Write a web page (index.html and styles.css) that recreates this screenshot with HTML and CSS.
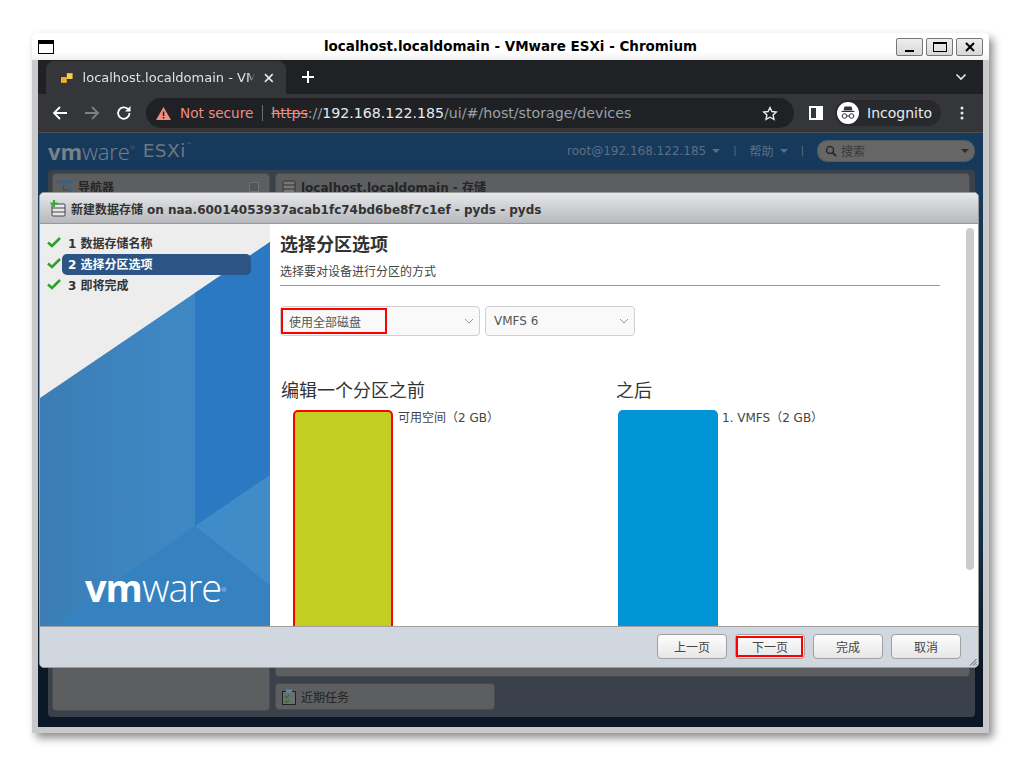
FILE: index.html
```html
<!DOCTYPE html>
<html>
<head>
  <meta charset="utf-8">
  <title>localhost.localdomain - VMware ESXi - Chromium</title>
  <link rel="stylesheet" href="styles.css">
</head>
<body>
  <div class="window">
    <div class="titlebar">
      <span class="win-icon"></span>
      <span class="win-title">localhost.localdomain - VMware ESXi - Chromium</span>
      <div class="win-buttons">
        <span class="win-btn"><i class="ico-min"></i></span>
        <span class="win-btn"><i class="ico-max"></i></span>
        <span class="win-btn">
          <svg width="12" height="12" viewBox="0 0 12 12"><path d="M2 2l8 8M10 2l-8 8" stroke="#000" stroke-width="2"/></svg>
        </span>
      </div>
    </div>

    <div class="browser">
      <div class="tabstrip">
        <div class="tab">
          <svg class="favicon" width="12" height="12" viewBox="0 0 12 12"><rect x="0" y="5" width="6" height="6" fill="#f2b01e"/><rect x="6" y="1" width="6" height="6" fill="#f6d04a"/></svg>
          <span class="tab-text">localhost.localdomain - VMware ESXi</span>
          <svg width="10" height="10" viewBox="0 0 10 10"><path d="M1 1l8 8M9 1l-8 8" stroke="#e8eaed" stroke-width="1.6"/></svg>
        </div>
        <svg class="new-tab" width="14" height="14" viewBox="0 0 14 14"><path d="M7 1v12M1 7h12" stroke="#fff" stroke-width="2"/></svg>
        <svg class="tab-menu" width="12" height="8" viewBox="0 0 12 8"><path d="M1.5 1.5L6 6l4.500-4.500" fill="none" stroke="#e8eaed" stroke-width="1.6"/></svg>
      </div>

      <div class="toolbar">
        <svg class="nav-ico" width="16" height="16" viewBox="0 0 16 16"><path d="M15 8H2M8 2L2 8l6 6" fill="none" stroke="#fff" stroke-width="1.800"/></svg>
        <svg class="nav-ico" width="16" height="16" viewBox="0 0 16 16"><path d="M1 8h13M8 2l6 6-6 6" fill="none" stroke="#7d7f83" stroke-width="1.800"/></svg>
        <svg class="nav-ico" width="16" height="16" viewBox="0 0 16 16"><path d="M13.500 8a5.700 5.700 0 1 1-1.700-4" fill="none" stroke="#fff" stroke-width="1.800"/><path d="M14.500 1v5.500H9z" fill="#fff"/></svg>
        <div class="omnibox">
          <svg width="15" height="13" viewBox="0 0 15 13"><path d="M7.500 0L15 13H0z" fill="#f28b82"/><rect x="6.800" y="4.500" width="1.500" height="4.500" fill="#202124"/><rect x="6.800" y="10" width="1.500" height="1.500" fill="#202124"/></svg>
          <span class="not-secure">Not secure</span>
          <span class="omni-sep"></span>
          <span class="url"><s class="scheme">https</s><span class="dim">://</span>192.168.122.185<span class="dim">/ui/#/host/storage/devices</span></span>
          <svg class="star" width="16" height="15" viewBox="0 0 16 15"><path d="M8 1.500l1.900 4 4.400.5-3.200 3 .9 4.400L8 11.200l-4 2.200.9-4.400-3.200-3 4.400-.5z" fill="none" stroke="#e8eaed" stroke-width="1.400"/></svg>
        </div>
        <span class="side-ico"><i></i></span>
        <div class="incognito">
          <svg width="22" height="22" viewBox="0 0 22 22"><circle cx="11" cy="11" r="11" fill="#fff"/><path d="M7.500 4.500h7l1 4h-9zM4.500 9h13v1h-13z" fill="#333"/><circle cx="7.500" cy="14" r="2.300" fill="none" stroke="#333"/><circle cx="14.500" cy="14" r="2.300" fill="none" stroke="#333"/><path d="M9.800 14h2.400" stroke="#333"/></svg>
          <span>Incognito</span>
        </div>
        <svg class="dots" width="4" height="14" viewBox="0 0 4 14"><circle cx="2" cy="2" r="1.500" fill="#e8eaed"/><circle cx="2" cy="7" r="1.500" fill="#e8eaed"/><circle cx="2" cy="12" r="1.500" fill="#e8eaed"/></svg>
      </div>

      <div class="esxi">
        <header class="esxi-head">
          <span class="brand"><b>vm</b>ware<sup>®</sup></span>
          <span class="brand-esxi">ESXi<sup>™</sup></span>
          <div class="esxi-user">
            <span>root@192.168.122.185</span><i class="caret"></i>
            <span class="bar">|</span>
            <span>帮助</span><i class="caret"></i>
            <span class="bar">|</span>
          </div>
          <div class="esxi-search">
            <svg width="12" height="12" viewBox="0 0 12 12"><circle cx="5" cy="5" r="3.500" fill="none" stroke="#2b2b2b" stroke-width="1.600"/><path d="M7.500 7.500L11 11" stroke="#2b2b2b" stroke-width="2"/></svg>
            <span>搜索</span><i class="caret dark"></i>
          </div>
        </header>
        <div class="esxi-main">
          <div class="pane nav-pane">
            <div class="pane-head">
              <svg width="16" height="13" viewBox="0 0 18 14"><g fill="none" stroke="#2d5f8e"><rect x=".5" y=".5" width="3" height="3"/><rect x="5" y=".5" width="2.500" height="2.500"/><rect x="9" y=".5" width="2.500" height="2.500"/><rect x="13" y=".5" width="2.500" height="2.500"/><rect x="12" y="9.500" width="3" height="3"/><path d="M7.500 5v6h4" stroke="#444"/></g></svg>
              <span>导航器</span>
              <i class="pane-pin"></i>
            </div>
          </div>
          <div class="right-col">
            <div class="pane storage-pane">
              <div class="pane-head">
                <svg width="14" height="14" viewBox="0 0 14 14"><rect x="1" y="1" width="12" height="12" rx="1.500" fill="#777" stroke="#333"/><path d="M1 5h12M1 9h12" stroke="#333"/></svg>
                <span>localhost.localdomain - 存储</span>
              </div>
            </div>
            <div class="pane tasks-pane">
              <svg width="14" height="16" viewBox="0 0 14 16"><rect x=".5" y="2.500" width="13" height="13" fill="#6c6f70" stroke="#222"/><rect x="4" y=".5" width="6" height="3" fill="#5d88aa"/><path d="M3 7l1.500 1.500L7 6M3 12l1.500 1.500L7 11" fill="none" stroke="#1f7a1f" stroke-width="1.400"/></svg>
              <span>近期任务</span>
            </div>
          </div>
        </div>
      </div>
    </div>
  </div>

  <div class="modal">
    <div class="modal-head">
      <svg width="16" height="17" viewBox="0 0 16 17"><rect x="2" y="4" width="13" height="12" rx="1" fill="#e8e8e8" stroke="#444"/><path d="M2 8h13M2 12h13" stroke="#444"/><path d="M4 0v7M.500 3.500h7" stroke="#2fae2f" stroke-width="2"/></svg>
      <span>新建数据存储 on naa.60014053937acab1fc74bd6be8f7c1ef - pyds - pyds</span>
    </div>
    <div class="modal-body">
      <aside class="steps">
        <svg class="steps-bg" width="230" height="402" viewBox="0 0 230 402">
          <defs>
            <linearGradient id="fade" x1="0" x2="1" y1="0" y2="0">
              <stop offset="0" stop-color="#3b7db4"/>
              <stop offset=".55" stop-color="#3f87c3"/>
              <stop offset="1" stop-color="#4089c6"/>
            </linearGradient>
          </defs>
          <rect width="230" height="402" fill="#ededed"/>
          <polygon points="230,18 0,174 0,402 230,402" fill="url(#fade)"/>
          <polygon points="230,18 155,69 155,302 230,251" fill="#2b79c3"/>
          <polygon points="155,302 230,251 230,361" fill="#408cc8"/>
          <polygon points="155,302 230,361 230,402 10,402" fill="#3681bf"/>
        </svg>
        <ul class="step-list">
          <li class="step"><svg class="check" width="14" height="11" viewBox="0 0 14 11"><path d="M1 5.500l4 3.500 8-8" fill="none" stroke="#2ca02c" stroke-width="2.500"/></svg><span class="step-label">1 数据存储名称</span></li>
          <li class="step active"><svg class="check" width="14" height="11" viewBox="0 0 14 11"><path d="M1 5.500l4 3.500 8-8" fill="none" stroke="#2ca02c" stroke-width="2.500"/></svg><span class="step-label">2 选择分区选项</span></li>
          <li class="step"><svg class="check" width="14" height="11" viewBox="0 0 14 11"><path d="M1 5.500l4 3.500 8-8" fill="none" stroke="#2ca02c" stroke-width="2.500"/></svg><span class="step-label">3 即将完成</span></li>
        </ul>
        <div class="steps-logo"><b>vm</b>ware<sup>®</sup></div>
      </aside>
      <section class="content">
        <h1>选择分区选项</h1>
        <p class="sub">选择要对设备进行分区的方式</p>
        <div class="select-row">
          <div class="select wide">
            <span>使用全部磁盘</span>
            <svg width="10" height="6" viewBox="0 0 10 6"><path d="M1 1l4 4 4-4" fill="none" stroke="#999"/></svg>
            <i class="mark"></i>
          </div>
          <div class="select narrow">
            <span>VMFS 6</span>
            <svg width="10" height="6" viewBox="0 0 10 6"><path d="M1 1l4 4 4-4" fill="none" stroke="#999"/></svg>
          </div>
        </div>
        <div class="compare">
          <div class="side before">
            <h2>编辑一个分区之前</h2>
            <div class="part">
              <div class="part-bar free"></div>
              <span>可用空间（2 GB）</span>
            </div>
          </div>
          <div class="side after">
            <h2>之后</h2>
            <div class="part">
              <div class="part-bar vmfs"></div>
              <span>1. VMFS（2 GB）</span>
            </div>
          </div>
        </div>
        <div class="scroll-thumb"></div>
      </section>
    </div>
    <div class="modal-foot">
      <button class="btn">上一页</button>
      <button class="btn marked">下一页</button>
      <button class="btn">完成</button>
      <button class="btn">取消</button>
      <svg class="grip" width="8" height="8" viewBox="0 0 8 8"><path d="M7.500 1L1 7.500M7.500 4L4 7.500M7.500 6.500l-1 1" stroke="#555"/></svg>
    </div>
  </div>
</body>
</html>
```

FILE: styles.css
```css
* {
  box-sizing: border-box;
}

html, body {
  margin: 0;
  height: 100%;
  background: #fff;
  overflow: hidden;
}

body {
  font-family: "DejaVu Sans", "Noto Sans CJK SC", sans-serif;
  font-size: 12px;
  color: #333;
}

/* desktop window */
.window {
  width: 957px;
  height: 700px;
  margin: 33px 0 0 32px;
  padding: 0 6px 6px;
  background: #c9c9c9;
  border-radius: 3px 3px 0 0;
  box-shadow: 4px 5px 9px rgba(0, 0, 0, .45);
  display: flex;
  flex-direction: column;
}

.titlebar {
  height: 27px;
  margin: 0 -6px;
  padding: 0 6px;
  background: linear-gradient(#fff 70%, #f0f0f0);
  border-radius: 3px 3px 0 0;
  display: flex;
  align-items: center;
  position: relative;
}

.win-icon {
  width: 16px;
  height: 14px;
  border: 1px solid #000;
  border-top-width: 4px;
  background: #fff;
}

.win-title {
  position: absolute;
  left: 292px;
  top: 5px;
  font-size: 13.470px;
  font-weight: bold;
  color: #000;
  white-space: nowrap;
}

.win-buttons {
  margin-left: auto;
  display: flex;
  gap: 3px;
}

.win-btn {
  width: 27px;
  height: 18px;
  border: 1px solid #777;
  border-radius: 2px;
  background: linear-gradient(#eee, #d8d8d8);
  display: flex;
  align-items: center;
  justify-content: center;
}

.ico-min {
  width: 9px;
  height: 2px;
  background: #000;
  margin-top: 9px;
}

.ico-max {
  width: 14px;
  height: 10px;
  border: 1px solid #000;
  border-top-width: 2px;
}

.browser {
  flex: 1;
  display: flex;
  flex-direction: column;
  min-height: 0;
}

/* chromium */
.tabstrip {
  height: 34px;
  background: #202124;
  padding-left: 8px;
  display: flex;
  align-items: flex-end;
  flex-shrink: 0;
}

.tab {
  width: 240px;
  height: 33px;
  background: #35363a;
  border-radius: 8px 8px 0 0;
  padding: 0 12px 0 15px;
  display: flex;
  align-items: center;
  color: #dfe1e5;
  font-size: 13px;
}

.tab-text {
  width: 179px;
  margin: 0 9px 0 10px;
  overflow: hidden;
  white-space: nowrap;
  -webkit-mask-image: linear-gradient(90deg, #000 165px, transparent);
}

.new-tab {
  margin: 0 0 10px 15px;
}

.tab-menu {
  margin: 0 16px 13px auto;
}

.toolbar {
  height: 39px;
  background: #35363a;
  border-bottom: 1px solid #4c4d50;
  padding: 0 0 0 14px;
  display: flex;
  align-items: center;
  flex-shrink: 0;
}

.nav-ico {
  margin-right: 16px;
}

.omnibox {
  width: 648px;
  height: 30px;
  margin-left: -2px;
  padding: 0 16px 0 10px;
  background: #202124;
  border-radius: 15px;
  display: flex;
  align-items: center;
  white-space: nowrap;
}

.not-secure {
  margin-left: 9px;
  color: #f28b82;
  font-size: 13.600px;
}

.omni-sep {
  width: 1px;
  height: 16px;
  margin: 0 8px 0 9px;
  background: #6e6f72;
}

.url {
  color: #e8eaed;
  font-size: 14.200px;
}

.scheme {
  color: #f28b82;
}

.dim {
  color: #9aa0a6;
}

.star {
  margin-left: auto;
}

.side-ico {
  width: 14px;
  height: 14px;
  margin-left: 15px;
  border: 2px solid #fff;
  background: #35363a;
  display: flex;
  justify-content: flex-end;
}

.side-ico i {
  width: 5px;
  background: #fff;
}

.incognito {
  width: 106px;
  height: 26px;
  margin-left: 12px;
  padding-left: 2px;
  background: #28292c;
  border-radius: 13px;
  display: flex;
  align-items: center;
  gap: 8px;
  color: #e8eaed;
  font-size: 14px;
}

.dots {
  margin-left: 19px;
}

/* esxi page behind the dialog, dimmed */
.esxi {
  flex: 1;
  min-height: 0;
  background: linear-gradient(#163a5c 0, #153653 60%, #0a1828 90%, #0a1726);
  display: flex;
  flex-direction: column;
}

.esxi-head {
  height: 37px;
  padding: 0 8px 2px 10px;
  display: flex;
  align-items: center;
  color: #6c7883;
  flex-shrink: 0;
}

.brand {
  font-family: "Open Sans", sans-serif;
  font-size: 22px;
  font-weight: 300;
  letter-spacing: -.1px;
  color: #77818a;
}

.brand b {
  font-weight: 700;
}

.brand sup, .brand-esxi sup, .steps-logo sup {
  font-size: 6px;
  vertical-align: 10px;
  line-height: 0;
}

.brand-esxi {
  margin-left: 8px;
  font-size: 18.500px;
  color: #6d7780;
  letter-spacing: .5px;
}

.esxi-user {
  margin-left: auto;
  display: flex;
  align-items: center;
  color: #5b6f82;
  font-size: 12px;
}

.caret {
  width: 0;
  height: 0;
  margin-left: 6px;
  border: 4px solid transparent;
  border-top-color: #5b6f82;
  border-bottom: 0;
}

.caret.dark {
  margin-left: auto;
  border-top-color: #2b2b2b;
}

.bar {
  margin: 0 13px;
  font-size: 10px;
}

.esxi-search {
  width: 158px;
  height: 22px;
  padding: 0 5px 0 7px;
  background: #666;
  border: 1px solid #4f5a63;
  border-radius: 10px;
  display: flex;
  align-items: center;
  gap: 4px;
  color: #3a3a3a;
}

.esxi-main {
  flex: 1;
  min-height: 0;
  margin: 0 8px 10px 10px;
  padding: 3px 5px 7px 4px;
  background: #3a414b;
  border-radius: 4px;
  display: flex;
  gap: 5px;
}

.pane {
  background: #5d5e60;
  border-radius: 4px;
  border: 1px solid #4a4c50;
}

.nav-pane {
  width: 218px;
  margin-bottom: -1px;
}

.right-col {
  flex: 1;
  display: flex;
  flex-direction: column;
  gap: 6px;
}

.storage-pane {
  flex: 1;
}

.pane-head {
  padding: 4px 4px 4px 6px;
  display: flex;
  align-items: center;
  gap: 5px;
  color: #252525;
  font-weight: bold;
}

.nav-pane .pane-head {
  padding-left: 4px;
}

.pane-pin {
  width: 10px;
  height: 10px;
  margin: 1px 6px 0 auto;
  border: 1px solid #6f7073;
  background: #555;
}

.tasks-pane {
  width: 220px;
  height: 27px;
  padding-left: 6px;
  display: flex;
  align-items: center;
  gap: 5px;
  color: #232323;
}

/* dialog */
.modal {
  position: absolute;
  left: 39px;
  top: 192px;
  width: 940px;
  height: 476px;
  background: #fff;
  border: 1px solid #999;
  border-radius: 5px;
  display: flex;
  flex-direction: column;
  overflow: hidden;
}

.modal-head {
  height: 31px;
  flex-shrink: 0;
  padding-left: 10px;
  background: linear-gradient(#e6e7ea, #b6b8bd);
  border-bottom: 1px solid #999;
  display: flex;
  align-items: center;
  gap: 5px;
  font-weight: bold;
  color: #333;
  letter-spacing: -.02px;
}

.modal-body {
  flex: 1;
  min-height: 0;
  display: flex;
}

.steps {
  width: 230px;
  flex-shrink: 0;
  position: relative;
}

.steps-bg {
  position: absolute;
  left: 0;
  top: 0;
}

.step-list {
  position: relative;
  list-style: none;
  margin: 0;
  padding: 9px 19px 0 7px;
}

.step {
  height: 21px;
  display: flex;
  align-items: center;
  font-weight: bold;
}

.check {
  flex-shrink: 0;
  margin: -3px 1px 0 0;
}

.step-label {
  flex: 1;
  height: 21px;
  line-height: 23px;
  padding-left: 6px;
  border-radius: 5px;
}

.step.active .step-label {
  background: #2c5585;
  color: #fff;
}

.steps-logo {
  position: absolute;
  left: 45px;
  top: 341px;
  font-family: "Open Sans", sans-serif;
  font-size: 38px;
  font-weight: 300;
  line-height: 44px;
  letter-spacing: -1px;
  color: #fff;
}

.steps-logo b {
  font-weight: 700;
}

.content {
  flex: 1;
  min-width: 0;
  padding: 7px 38px 0 10px;
  position: relative;
  overflow: hidden;
  font-family: "Noto Sans CJK SC", "DejaVu Sans", sans-serif;
}

.content h1 {
  margin: 0;
  font-size: 18px;
  line-height: 24px;
  font-weight: bold;
  color: #333;
}

.sub {
  margin: 0;
  height: 17px;
  padding-top: 8px;
  box-sizing: content-box;
  line-height: 16px;
  border-bottom: 1px solid #999;
  padding-bottom: 5px;
  color: #444;
}

.select-row {
  margin-top: 20px;
  display: flex;
  gap: 5px;
}

.select {
  height: 30px;
  padding: 0 5px 0 8px;
  background: #f9f9f9;
  border: 1px solid #d0d0d0;
  border-radius: 4px;
  display: flex;
  align-items: center;
  justify-content: space-between;
  color: #555;
  position: relative;
  font-family: "DejaVu Sans", "Noto Sans CJK SC", sans-serif;
}

.select.wide {
  width: 200px;
}

.select.narrow {
  width: 150px;
  padding-left: 8px;
}

.mark {
  position: absolute;
  left: 0;
  top: 1px;
  width: 106px;
  height: 26px;
  border: 2px solid #f00;
}

.compare {
  margin-top: 41px;
  display: flex;
}

.side.before {
  width: 336px;
  padding-left: 1px;
}

.side h2 {
  margin: 0 0 9px;
  font-size: 18px;
  line-height: 24px;
  font-weight: normal;
  color: #333;
}

.part {
  display: flex;
  gap: 5px;
  padding-left: 12px;
  line-height: 17px;
  color: #444;
  font-family: "DejaVu Sans", "Noto Sans CJK SC", sans-serif;
}

.after .part {
  padding-left: 2px;
  gap: 4px;
}

.part-bar {
  width: 100px;
  height: 260px;
  border-radius: 5px;
}

.part-bar.free {
  background: #c2cf22;
  border: 2px solid #f00;
}

.part-bar.vmfs {
  background: #0096d6;
}

.scroll-thumb {
  position: absolute;
  right: 4px;
  top: 4px;
  width: 8px;
  height: 342px;
  background: #ccc;
  border-radius: 4px;
}

.modal-foot {
  height: 41px;
  flex-shrink: 0;
  background: #d0d7df;
  border-top: 1px solid #a0a0a0;
  padding: 7px 17px 0 0;
  display: flex;
  justify-content: flex-end;
  gap: 8px;
  position: relative;
}

.btn {
  width: 70px;
  height: 25px;
  padding: 0;
  border: 1px solid #a0a0a0;
  border-radius: 4px;
  background: linear-gradient(#fdfdfd, #e6e6e6);
  font: 12px "DejaVu Sans", "Noto Sans CJK SC", sans-serif;
  color: #444;
  position: relative;
}

.btn.marked::after {
  content: "";
  position: absolute;
  left: 0;
  top: 1px;
  right: 1px;
  bottom: 1px;
  border: 2px solid #f00;
}

.grip {
  position: absolute;
  right: 1px;
  bottom: 1px;
}
```
